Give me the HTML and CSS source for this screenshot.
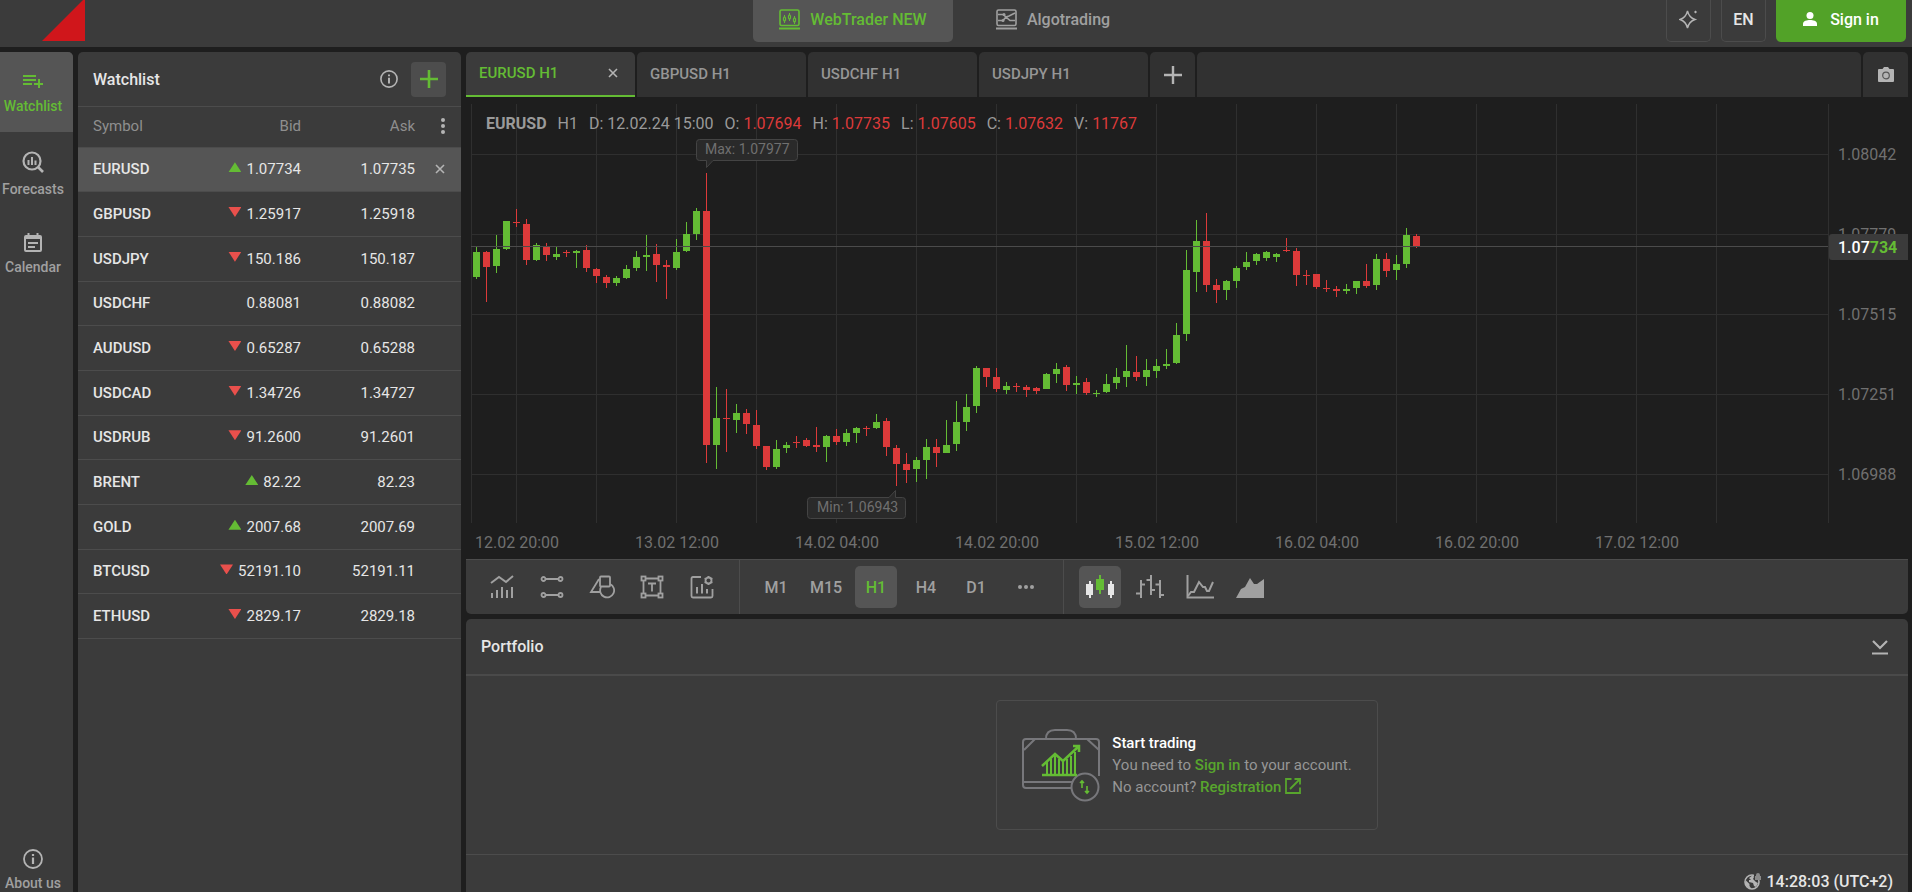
FILE: index.html
```html
<!DOCTYPE html>
<html lang="en">
  <head>
    <meta charset="UTF-8" />
    <meta name="viewport" content="width=device-width, initial-scale=1.0" />
    <title>WebTrader</title>
    <link rel="stylesheet" href="styles.css" />
  </head>
  <body>
    <header class="header">
      <a class="logo" href="#" aria-label="Home">
        <svg width="43" height="42" viewBox="0 0 43 42"><path d="M0 41L43 -2V41z" fill="#d0161b" /></svg>
      </a>
      <nav class="modes">
        <a class="mode active" href="#">
          <svg width="21" height="21" viewBox="0 0 21 21" fill="none" stroke="currentColor" stroke-width="1.6">
            <rect x="1" y="1" width="19" height="15.500" rx="1.500" />
            <path d="M0 19.500h21" stroke-width="2" />
            <path d="M5.500 6v2m0 4v2M10.500 4v2m0 4v2M15.500 7v2m0 4v2" stroke-width="1" />
            <path d="M5.500 7.500l1 1.500v2l-1 1.500-1-1.500V9zM10.500 5.500l1 1.500v2l-1 1.500-1-1.500V7zM15.500 8.500l1 1.500v2l-1 1.500-1-1.500v-2z" stroke-width="1.200" />
          </svg>
          WebTrader NEW
        </a>
        <a class="mode" href="#">
          <svg width="21" height="21" viewBox="0 0 21 21" fill="none" stroke="currentColor" stroke-width="1.6">
            <rect x="1" y="1" width="19" height="15.500" rx="1.500" />
            <path d="M0 19.500h21" stroke-width="2" />
            <path d="M2 5.500h5l3 2.500-3 3.500H2M19 4l-6 3-3 1 4 3.500h5" />
            <circle cx="8" cy="5.500" r="1.500" fill="currentColor" stroke="none" />
            <circle cx="7" cy="11.500" r="1.500" fill="currentColor" stroke="none" />
          </svg>
          Algotrading
        </a>
      </nav>
      <div class="account">
        <button class="square" aria-label="Theme">
          <svg width="19" height="20" viewBox="0 0 19 20" fill="none" stroke="currentColor" stroke-width="1.4">
            <path d="M8.500 2Q10 8.500 16 10.500Q10 12.500 8.500 19Q7 12.500 1 10.500Q7 8.500 8.500 2z" />
            <path d="M16.500 1.500l1.500 1.500-1.500 1.500L15 3z" fill="currentColor" stroke="none" />
          </svg>
        </button>
        <button class="square">EN</button>
        <button class="signin">
          <svg width="14" height="14" viewBox="0 0 14 14" fill="currentColor">
            <circle cx="7" cy="3.500" r="3.500" />
            <path d="M0 14v-2.500C0 9 4 8 7 8s7 1 7 3.500V14z" />
          </svg>
          Sign in
        </button>
      </div>
    </header>

    <div class="wrapper">
      <nav class="sidebar">
        <a class="side-item active" href="#">
          <svg width="20" height="22" viewBox="0 0 20 22" fill="currentColor">
            <path d="M0 5h13v2H0zM0 9h13v2H0zM0 13h9v2H0zM15 9h2v4h3v2h-3v3h-2v-3h-4v-2h4z" />
          </svg>
          <span>Watchlist</span>
        </a>
        <a class="side-item" href="#">
          <svg width="22" height="22" viewBox="0 0 22 22" fill="none" stroke="currentColor" stroke-width="2">
            <circle cx="10" cy="10" r="8.500" stroke-width="2.200" />
            <path d="M16 16l5 5" stroke-width="2.600" />
            <path d="M6.500 9v5M10 6v8M13.500 9.500V14" />
          </svg>
          <span>Forecasts</span>
        </a>
        <a class="side-item calendar" href="#">
          <svg width="18" height="20" viewBox="0 0 18 20" fill="none" stroke="currentColor" stroke-width="2">
            <rect x="1" y="3" width="16" height="15" rx="1" />
            <path d="M1 4.500h16" stroke-width="3" />
            <path d="M4.500 0v3M13.500 0v3M4 10h10M4 14h7" />
          </svg>
          <span>Calendar</span>
        </a>
        <a class="side-item about" href="#">
          <svg width="20" height="20" viewBox="0 0 20 20" fill="none" stroke="currentColor" stroke-width="1.8">
            <circle cx="10" cy="10" r="9" />
            <path d="M10 8.500v6.500M10 5v2" stroke-width="2.200" />
          </svg>
          <span>About us</span>
        </a>
      </nav>

      <section class="watchlist">
        <div class="watch-head">
          <h2>Watchlist</h2>
          <button class="icon-btn" aria-label="Info">
            <svg width="18" height="18" viewBox="0 0 20 20" fill="none" stroke="currentColor" stroke-width="1.8">
              <circle cx="10" cy="10" r="9" />
              <path d="M10 8.500v6.500M10 5v2" stroke-width="2.200" />
            </svg>
          </button>
          <button class="add" aria-label="Add symbol">
            <svg width="18" height="18" viewBox="0 0 18 18"><path d="M9 0v18M0 9h18" stroke="currentColor" stroke-width="2.600" /></svg>
          </button>
        </div>
        <table class="quotes">
          <thead>
            <tr>
              <th>Symbol</th>
              <th>Bid</th>
              <th>Ask</th>
              <th>
                <button class="icon-btn" aria-label="Columns">
                  <svg width="4" height="16" viewBox="0 0 4 16" fill="currentColor"><circle cx="2" cy="2" r="2" /><circle cx="2" cy="8" r="2" /><circle cx="2" cy="14" r="2" /></svg>
                </button>
              </th>
            </tr>
          </thead>
          <tbody>
            <tr class="selected">
              <td>EURUSD</td>
              <td class="up">1.07734</td>
              <td>1.07735</td>
              <td>
                <button class="icon-btn" aria-label="Remove">
                  <svg width="10" height="10" viewBox="0 0 10 10"><path d="M1 1l8 8M9 1l-8 8" stroke="currentColor" stroke-width="1.600" /></svg>
                </button>
              </td>
            </tr>
            <tr><td>GBPUSD</td><td class="down">1.25917</td><td>1.25918</td><td></td></tr>
            <tr><td>USDJPY</td><td class="down">150.186</td><td>150.187</td><td></td></tr>
            <tr><td>USDCHF</td><td>0.88081</td><td>0.88082</td><td></td></tr>
            <tr><td>AUDUSD</td><td class="down">0.65287</td><td>0.65288</td><td></td></tr>
            <tr><td>USDCAD</td><td class="down">1.34726</td><td>1.34727</td><td></td></tr>
            <tr><td>USDRUB</td><td class="down">91.2600</td><td>91.2601</td><td></td></tr>
            <tr><td>BRENT</td><td class="up">82.22</td><td>82.23</td><td></td></tr>
            <tr><td>GOLD</td><td class="up">2007.68</td><td>2007.69</td><td></td></tr>
            <tr><td>BTCUSD</td><td class="down">52191.10</td><td>52191.11</td><td></td></tr>
            <tr><td>ETHUSD</td><td class="down">2829.17</td><td>2829.18</td><td></td></tr>
          </tbody>
        </table>
      </section>

      <main class="main">
        <div class="tabs">
          <div class="tab active">
            <a href="#">EURUSD H1</a>
            <button class="icon-btn" aria-label="Close tab">
              <svg width="10" height="10" viewBox="0 0 10 10"><path d="M1 1l8 8M9 1l-8 8" stroke="currentColor" stroke-width="1.600" /></svg>
            </button>
          </div>
          <div class="tab"><a href="#">GBPUSD H1</a></div>
          <div class="tab"><a href="#">USDCHF H1</a></div>
          <div class="tab"><a href="#">USDJPY H1</a></div>
          <button class="tab-btn" aria-label="New tab">
            <svg width="18" height="18" viewBox="0 0 18 18"><path d="M9 0v18M0 9h18" stroke="currentColor" stroke-width="2.400" /></svg>
          </button>
          <div class="tab-rest"></div>
          <button class="tab-btn" aria-label="Screenshot">
            <svg width="16" height="15" viewBox="0 0 16 15">
              <path d="M1 2h3.500L6 0h4l1.500 2H15q1 0 1 1v11q0 1-1 1H1q-1 0-1-1V3q0-1 1-1z" fill="currentColor" />
              <circle cx="8" cy="8.500" r="3.300" fill="none" stroke="#555" stroke-width="1.200" />
            </svg>
          </button>
        </div>

        <div class="chart">
          <svg id="chart" class="chart-svg"></svg>
          <div class="legend">
            <b>EURUSD</b>
            <span>H1</span>
            <span>D: 12.02.24 15:00</span>
            <span>O: <i>1.07694</i></span>
            <span>H: <i>1.07735</i></span>
            <span>L: <i>1.07605</i></span>
            <span>C: <i>1.07632</i></span>
            <span>V: <i>11767</i></span>
          </div>
          <div class="price-tag">1.07<b>734</b></div>
        </div>

        <div class="toolbar">
          <div class="group">
            <button class="tool" aria-label="Indicators">
              <svg width="24" height="24" viewBox="0 0 24 24" fill="none" stroke="currentColor" stroke-width="2">
                <path d="M1 8l8-6 7 5 7-6" />
                <path d="M2 18v5M7 15v8M12 12v11M17 15v8M22 12v11" />
              </svg>
            </button>
            <button class="tool" aria-label="Lines">
              <svg width="24" height="24" viewBox="0 0 24 24" fill="none" stroke="currentColor" stroke-width="1.800">
                <circle cx="3.500" cy="4" r="2" /><circle cx="20.500" cy="4" r="2" />
                <circle cx="3.500" cy="20" r="2" /><circle cx="20.500" cy="20" r="2" />
                <path d="M5.500 4h13M5.500 20h13" />
              </svg>
            </button>
            <button class="tool" aria-label="Shapes">
              <svg width="26" height="24" viewBox="0 0 26 24" fill="none" stroke="currentColor" stroke-width="1.800">
                <path d="M10 4L2 17h9" />
                <rect x="11" y="1.500" width="10" height="10" rx="1" />
                <path d="M12 12a7 7 0 1 0 9-3" />
              </svg>
            </button>
            <button class="tool" aria-label="Text">
              <svg width="24" height="24" viewBox="0 0 24 24" fill="none" stroke="currentColor" stroke-width="1.800">
                <rect x="1.500" y="1.500" width="4" height="4" /><rect x="18.500" y="1.500" width="4" height="4" />
                <rect x="1.500" y="18.500" width="4" height="4" /><rect x="18.500" y="18.500" width="4" height="4" />
                <path d="M5.500 3.500h13M5.500 20.500h13M3.500 5.500v13M20.500 5.500v13" />
                <path d="M8 8.500h8M12 8.500v8" />
              </svg>
            </button>
            <button class="tool" aria-label="Templates">
              <svg width="24" height="24" viewBox="0 0 24 24" fill="none" stroke="currentColor" stroke-width="1.800">
                <path d="M11 2H3Q1.500 2 1.500 3.500V21q0 1.500 1.500 1.500h18q1.500 0 1.500-1.500v-7" />
                <path d="M7 12v6.500M12 9v9.500M17 14v4.500" stroke-width="2" />
                <circle cx="18.500" cy="5.500" r="3" />
                <path d="M18.500 1v2M18.500 8v2M14.600 3.200l1.800 1M20.600 6.700l1.800 1M14.600 7.700l1.800-1M20.600 4.200l1.800-1" />
              </svg>
            </button>
          </div>
          <div class="group">
            <button class="tool">M1</button>
            <button class="tool">M15</button>
            <button class="tool active">H1</button>
            <button class="tool">H4</button>
            <button class="tool">D1</button>
            <button class="tool" aria-label="More">
              <svg width="16" height="4" viewBox="0 0 16 4" fill="currentColor"><circle cx="2" cy="2" r="2" /><circle cx="8" cy="2" r="2" /><circle cx="14" cy="2" r="2" /></svg>
            </button>
          </div>
          <div class="group">
            <button class="tool active" aria-label="Candles">
              <svg width="28" height="24" viewBox="0 0 28 24">
                <path d="M3 6h2v3h2v11H5v3H3v-3H0V9h3zM24 6h2v3h2v11h-2v3h-2v-3h-2V9h2z" fill="#e6e6e6" />
                <path d="M13 0h2v4h3v11h-3v4h-2v-4h-3V4h3z" fill="#64bc34" />
              </svg>
            </button>
            <button class="tool" aria-label="Bars">
              <svg width="28" height="24" viewBox="0 0 28 24" fill="none" stroke="currentColor" stroke-width="2">
                <path d="M5 5v18M0 18.500h5M5 9.500h4M15 0v20M10.500 5H15M15 15h4M24 5v18M19.500 9.500H24M24 20h4" />
              </svg>
            </button>
            <button class="tool" aria-label="Line">
              <svg width="28" height="24" viewBox="0 0 28 24" fill="none" stroke="currentColor" stroke-width="2">
                <path d="M1.500 0v22.500H28" />
                <path d="M2 21l3-4h3l5-10 4 5h2l2 4h2l4-9" />
              </svg>
            </button>
            <button class="tool" aria-label="Area">
              <svg width="28" height="24" viewBox="0 0 28 24" fill="currentColor"><path d="M0 23l5-9 4-2 5-9 4 6h3l7-5v19z" /></svg>
            </button>
          </div>
        </div>

        <section class="portfolio">
          <div class="portfolio-head">
            <h2>Portfolio</h2>
            <button class="icon-btn" aria-label="Collapse">
              <svg width="16" height="16" viewBox="0 0 16 16" fill="none" stroke="currentColor" stroke-width="2.200">
                <path d="M1 2l7 7 7-7M0 14.500h16" />
              </svg>
            </button>
          </div>
          <div class="portfolio-body">
            <div class="card">
              <svg width="78" height="74" viewBox="0 0 78 74" fill="none" stroke="#77777b" stroke-width="2">
                <path d="M24 11q0-9 9-9h12q9 0 9 9" />
                <path d="M50 60H4q-3 0-3-3V14q0-3 3-3h70q3 0 3 3v34M1 54h49" />
                <path d="M13 11L2 22M65 11l12 11" />
                <circle cx="63" cy="59" r="13.500" fill="#3b3b3b" />
                <g stroke="#64bc34">
                  <path d="M20 47h35M20 38l13-12 8 7L56 19M51 18h6v6" stroke-width="2.500" />
                  <path d="M25 47V34M29 47V31M33 47V28M37 47V31M41 47V34M45 47V31M49 47V28M53 47V24" />
                  <path d="M60 60v-7m-2 2l2-2 2 2M65 58v7m-2-2l2 2 2-2" stroke-width="1.600" />
                </g>
              </svg>
              <div class="info">
                <h3>Start trading</h3>
                <p>You need to <a href="#">Sign in</a> to your account.</p>
                <p>
                  No account?
                  <a href="#">Registration
                    <svg width="16" height="16" viewBox="0 0 16 16" fill="none" stroke="currentColor" stroke-width="1.800"><path d="M6.500 1H1v14h14V9.500M9.500 1H15v5.500M15 1L5 11" /></svg></a>
                </p>
              </div>
            </div>
          </div>
          <div class="status">
            <svg width="17" height="17" viewBox="0 0 17 17">
              <circle cx="8" cy="9" r="7" fill="none" stroke="currentColor" stroke-width="1.600" />
              <path d="M1.500 7l4 4v2l2 3-4-2-2-3zM5 5l4-3 1 2-1 2 3 3 2 1-2 4-2-1-1-3-4-1V7h2z" fill="currentColor" />
              <path d="M10 0h7v7h-7z" fill="#3b3b3b" />
              <path d="M11 3h1V2q0-2 2-2t2 2v1h1v4h-6z" fill="#8a8a8a" />
            </svg>
            14:28:03 (UTC+2)
          </div>
        </section>
      </main>
    </div>
    <script src="chart.js"></script>
  </body>
</html>
```

FILE: styles.css
```css
* {
  padding: 0;
  margin: 0;
  box-sizing: border-box;
}

body {
  display: flex;
  flex-direction: column;
  height: 100vh;
  overflow: hidden;
  background: #1e1e1e;
  color: #e6e6e6;
  font-family: Roboto, "Liberation Sans", sans-serif;
  font-size: 15px;
}

a {
  color: inherit;
  text-decoration: none;
}

button {
  display: flex;
  align-items: center;
  justify-content: center;
  border: 0;
  background: none;
  color: inherit;
  font: inherit;
  cursor: pointer;
}

svg {
  flex: none;
}

h2 {
  font-size: 16px;
  font-weight: 500;
}

.icon-btn {
  color: #b4b4b4;
}

/* header */
.header {
  display: grid;
  grid-template-columns: 1fr auto 1fr;
  flex: none;
  height: 47px;
  padding: 0 6px 5px 42px;
  background: #3b3b3b;
  font-size: 16px;
  font-weight: 500;
}

.logo {
  display: flex;
}

.modes {
  display: flex;
  margin-right: 42px;
}

.mode {
  display: flex;
  align-items: center;
  justify-content: center;
  gap: 10px;
  width: 200px;
  padding-bottom: 3px;
  border-radius: 0 0 5px 5px;
  color: #a0a0a0;
}

.mode.active {
  background: #555;
  color: #64bc34;
}

.account {
  display: flex;
  justify-content: flex-end;
  gap: 10px;
}

.square {
  width: 45px;
  padding-bottom: 3px;
  border: 1px solid #4c4c4c;
  border-top: 0;
  border-radius: 0 0 5px 5px;
  color: #e6e6e6;
}

.square svg {
  color: #b4b4b4;
}

.signin {
  gap: 13px;
  width: 130px;
  padding-bottom: 4px;
  border-radius: 0 0 5px 5px;
  background: #52a228;
  color: #fff;
}

/* columns */
.wrapper {
  display: flex;
  flex: 1;
  gap: 5px;
  min-height: 0;
  padding: 5px 4px 0 0;
}

.sidebar {
  display: flex;
  flex-direction: column;
  gap: 2px;
  width: 73px;
  border-radius: 0 5px 0 0;
  background: #3b3b3b;
  overflow: hidden;
}

.side-item {
  display: flex;
  flex-direction: column;
  align-items: center;
  justify-content: center;
  gap: 8px;
  height: 80px;
  padding-right: 7px;
  color: #a0a0a0;
  font-size: 14px;
  font-weight: 500;
  line-height: 16px;
}

.side-item svg {
  color: #b4b4b4;
}

.side-item.active,
.side-item.active svg {
  background: #555;
  color: #64bc34;
}

.side-item.active {
  gap: 6px;
}

.calendar {
  gap: 6px;
  height: 76px;
}

.about {
  gap: 6px;
  height: 44px;
  margin-top: auto;
}

/* watchlist */
.watchlist {
  width: 383px;
  border-radius: 5px 5px 0 0;
  background: #3b3b3b;
}

.watch-head {
  display: flex;
  align-items: center;
  height: 55px;
  padding: 0 15px;
  border-bottom: 1px solid #4c4c4c;
}

.watch-head h2 {
  flex: 1;
}

.add {
  width: 35px;
  height: 35px;
  margin-left: 13px;
  border-radius: 4px;
  background: #4d4d4d;
  color: #64bc34;
}

.quotes {
  width: 100%;
  height: 532px;
  border-collapse: collapse;
  table-layout: fixed;
}

.quotes th,
.quotes td {
  border-bottom: 1px solid #4c4c4c;
  text-align: right;
  font-weight: 400;
}

.quotes th {
  width: 114px;
  height: 40px;
  padding-bottom: 2px;
  color: #8f8f8f;
}

.quotes th:first-child {
  width: 109px;
}

.quotes th:last-child {
  width: 46px;
}

.quotes th:first-child,
.quotes td:first-child {
  padding-left: 15px;
  text-align: left;
}

.quotes td:first-child {
  font-weight: 500;
}

.quotes th:last-child,
.quotes td:last-child {
  padding-right: 16px;
}

.quotes .icon-btn {
  margin-left: auto;
}

.selected {
  background: #555;
}

.up::before,
.down::before {
  content: "";
  display: inline-block;
  width: 13px;
  height: 10px;
  margin-right: 5px;
  vertical-align: 2px;
  background: #64bc34;
  clip-path: polygon(50% 0, 100% 100%, 0 100%);
}

.down::before {
  background: #e9504c;
  clip-path: polygon(0 0, 100% 0, 50% 100%);
}

/* chart */
.main {
  display: flex;
  flex-direction: column;
  flex: 1;
  min-width: 0;
}

.tabs {
  display: flex;
  flex: none;
  gap: 2px;
  height: 45px;
}

.tab,
.tab-btn,
.tab-rest {
  border-radius: 5px 5px 0 0;
  background: #313131;
}

.tab {
  display: flex;
  align-items: center;
  justify-content: space-between;
  width: 169px;
  padding: 0 17px 2px 13px;
  color: #969696;
  font-weight: 500;
}

.tab.active {
  border-bottom: 2px solid #64bc34;
  background: #3b3b3b;
  color: #64bc34;
}

.tab-btn {
  width: 45px;
  color: #b4b4b4;
}

.tab-rest {
  flex: 1;
}

.chart {
  position: relative;
  flex: 1;
  overflow: hidden;
}

.chart-svg {
  display: block;
  width: 100%;
  height: 462px;
  font-size: 16px;
}

.grid {
  fill: #2f2f2f;
}

.price-line {
  fill: #4b4b4b;
}

.axis {
  fill: #707070;
}

.bubble {
  fill: #2a2a2a;
  stroke: #444;
}

.bubble-text {
  fill: #707070;
  font-size: 14px;
}

.bull {
  fill: #64bc34;
}

.bear {
  fill: #dc3a3a;
}

.legend {
  position: absolute;
  top: 18px;
  left: 20px;
  display: flex;
  gap: 11px;
  color: #9a9a9a;
  font-size: 16px;
  line-height: 18px;
}

.legend i {
  color: #dc3a3a;
  font-style: normal;
}

.price-tag {
  position: absolute;
  top: 137px;
  right: 0;
  width: 79px;
  padding: 2px 0 0 9px;
  border-radius: 3px 0 0 3px;
  background: #3b3b3b;
  color: #fff;
  font-size: 16px;
  font-weight: 500;
  line-height: 24px;
}

.price-tag b {
  color: #64bc34;
}

.toolbar {
  display: flex;
  flex: none;
  height: 55px;
  border-top: 1px solid #4c4c4c;
  border-radius: 0 0 5px 5px;
  background: #3b3b3b;
  color: #a0a0a0;
}

.group {
  display: flex;
  align-items: center;
  gap: 8px;
  padding: 0 16px 0 15px;
  border-right: 1px solid #4c4c4c;
}

.group:last-child {
  border-right: 0;
}

.tool {
  width: 42px;
  height: 42px;
  border-radius: 5px;
  font-size: 16px;
  font-weight: 500;
}

.tool.active {
  background: #555;
  color: #64bc34;
}

/* portfolio */
.portfolio {
  display: flex;
  flex-direction: column;
  flex: none;
  margin-top: 5px;
  border-radius: 5px 5px 0 0;
  background: #3b3b3b;
}

.portfolio-head {
  display: flex;
  align-items: center;
  justify-content: space-between;
  height: 57px;
  padding: 0 20px 0 15px;
  border-bottom: 2px solid #4a4a4a;
}

.portfolio-body {
  display: flex;
  justify-content: center;
  padding: 24px 0;
}

.card {
  display: flex;
  align-items: center;
  gap: 12px;
  height: 130px;
  padding: 0 25px;
  border: 1px solid #4c4c4c;
  border-radius: 4px;
}

.info {
  color: #969696;
  line-height: 22px;
}

.info h3 {
  color: #fff;
  font-size: 15px;
  font-weight: 500;
}

.info a {
  color: #58a52d;
  font-weight: 500;
}

.info svg {
  vertical-align: -2px;
}

.status {
  display: flex;
  align-items: center;
  justify-content: flex-end;
  gap: 5px;
  height: 38px;
  padding: 15px 15px 0 0;
  border-top: 1px solid #4c4c4c;
  font-size: 16px;
  font-weight: 500;
}

.status svg {
  color: #b4b4b4;
}
```

FILE: chart.js
```js
// high, body top, body bottom, low, 1 = bull
const candles = [
  [150, 155, 180, 182, 1], [154, 155, 170, 205, 0], [138, 152, 169, 176, 1],
  [124, 124, 152, 153, 1], [112, 125, 126, 130, 0], [122, 127, 163, 168, 0],
  [146, 148, 163, 164, 1], [146, 150, 158, 164, 0], [150, 157, 160, 163, 1],
  [153, 155, 156, 160, 0], [153, 154, 156, 171, 1], [148, 153, 171, 175, 0],
  [171, 172, 179, 186, 0], [178, 180, 186, 191, 0], [179, 181, 186, 189, 1],
  [168, 172, 181, 182, 1], [154, 160, 171, 174, 1], [138, 158, 160, 174, 1],
  [147, 157, 168, 185, 0], [163, 168, 170, 202, 0], [142, 155, 171, 173, 1],
  [125, 137, 154, 155, 1], [111, 114, 137, 143, 1], [76, 114, 348, 366, 0],
  [290, 321, 348, 372, 1], [292, 321, 322, 355, 0], [307, 316, 323, 336, 1],
  [312, 316, 327, 337, 0], [313, 328, 349, 352, 0], [349, 349, 370, 373, 0],
  [343, 352, 370, 372, 1], [345, 348, 351, 356, 1], [339, 345, 346, 351, 0],
  [341, 343, 349, 350, 0], [330, 348, 350, 355, 0], [338, 339, 350, 365, 1],
  [332, 339, 345, 348, 0], [332, 336, 345, 349, 1], [330, 331, 336, 346, 1],
  [329, 331, 332, 339, 0], [317, 325, 331, 332, 1], [321, 324, 350, 359, 0],
  [348, 351, 367, 389, 0], [356, 367, 373, 386, 0], [360, 363, 372, 385, 1],
  [342, 350, 363, 382, 1], [342, 350, 356, 370, 0], [323, 348, 356, 356, 1],
  [304, 325, 347, 354, 1], [297, 310, 325, 334, 1], [269, 271, 309, 316, 1],
  [271, 271, 280, 290, 0], [271, 280, 292, 295, 0], [285, 289, 293, 297, 1],
  [286, 289, 290, 295, 0], [288, 290, 293, 300, 0], [290, 291, 294, 297, 0],
  [276, 277, 292, 292, 1], [266, 272, 277, 286, 1], [268, 270, 288, 294, 0],
  [279, 286, 288, 297, 1], [281, 285, 296, 298, 0], [293, 296, 297, 300, 1],
  [277, 287, 295, 296, 1], [271, 280, 286, 292, 1], [248, 274, 280, 290, 1],
  [259, 275, 280, 284, 0], [262, 273, 280, 289, 1], [262, 269, 274, 281, 1],
  [252, 267, 269, 272, 1], [226, 238, 266, 267, 1], [153, 173, 237, 244, 1],
  [123, 144, 175, 195, 1], [116, 144, 188, 195, 0], [182, 188, 193, 206, 0],
  [183, 184, 193, 203, 1], [169, 171, 184, 191, 1], [155, 165, 170, 173, 1],
  [156, 157, 164, 168, 1], [154, 155, 161, 164, 1], [156, 157, 160, 165, 1],
  [141, 153, 154, 155, 0], [151, 154, 178, 189, 0], [173, 178, 179, 188, 0],
  [177, 177, 190, 192, 0], [183, 191, 192, 195, 0], [189, 192, 194, 200, 0],
  [187, 192, 194, 197, 1], [184, 184, 191, 197, 1], [167, 184, 189, 191, 0],
  [157, 162, 188, 193, 1], [156, 162, 174, 180, 0], [158, 167, 173, 183, 1],
  [131, 138, 167, 171, 1], [137, 139, 149, 151, 0],
];
const prices = ["1.08042", "1.07779", "1.07515", "1.07251", "1.06988"];
const times = [
  "12.02 20:00", "13.02 12:00", "14.02 04:00", "14.02 20:00",
  "15.02 12:00", "16.02 04:00", "16.02 20:00", "17.02 12:00",
];
const svg = document.getElementById("chart");

const rect = (cls, x, y, w, h) =>
  `<rect class="${cls}" x="${x}" y="${y}" width="${w}" height="${h}"/>`;

function draw() {
  const axis = svg.clientWidth - 80;
  let out = rect("grid", 5, 7, 1, 419) + rect("grid", axis, 7, 1, 419);

  for (let x = 50; x < axis - 80; x += 80) {
    out += rect("grid", x, 7, 1, 419);
  }
  prices.forEach((price, i) => {
    const y = 57 + i * 80;
    out += rect("grid", 5, y, axis - 5, 1);
    out += `<text class="axis" x="${axis + 10}" y="${y + 6}">${price}</text>`;
  });
  times.forEach((time, i) => {
    out += `<text class="axis" x="${51 + i * 160}" y="451" text-anchor="middle">${time}</text>`;
  });

  candles.forEach(([high, top, bottom, low, bull], i) => {
    const cls = bull ? "bull" : "bear";
    const x = 7 + i * 10;
    out += rect(cls, x + 3, high, 1, low - high);
    out += rect(cls, x, top, 7, bottom - top);
  });
  out += rect("price-line", 5, 149, axis - 5, 1);

  // max and min bubbles
  out += `<path class="bubble" d="M233.500 42.500h95q3 0 3 3v15q0 3-3 3H247l-6.500 7v-7h-7q-3 0-3-3v-15q0-3 3-3z"/>`;
  out += `<text class="bubble-text" x="239" y="57">Max: 1.07977</text>`;
  out += `<path class="bubble" d="M344.500 400.500H423l6.500-7v7h7q3 0 3 3v15q0 3-3 3h-92q-3 0-3-3v-15q0-3 3-3z"/>`;
  out += `<text class="bubble-text" x="351" y="415">Min: 1.06943</text>`;

  svg.innerHTML = out;
}

draw();
window.addEventListener("resize", draw);
```
